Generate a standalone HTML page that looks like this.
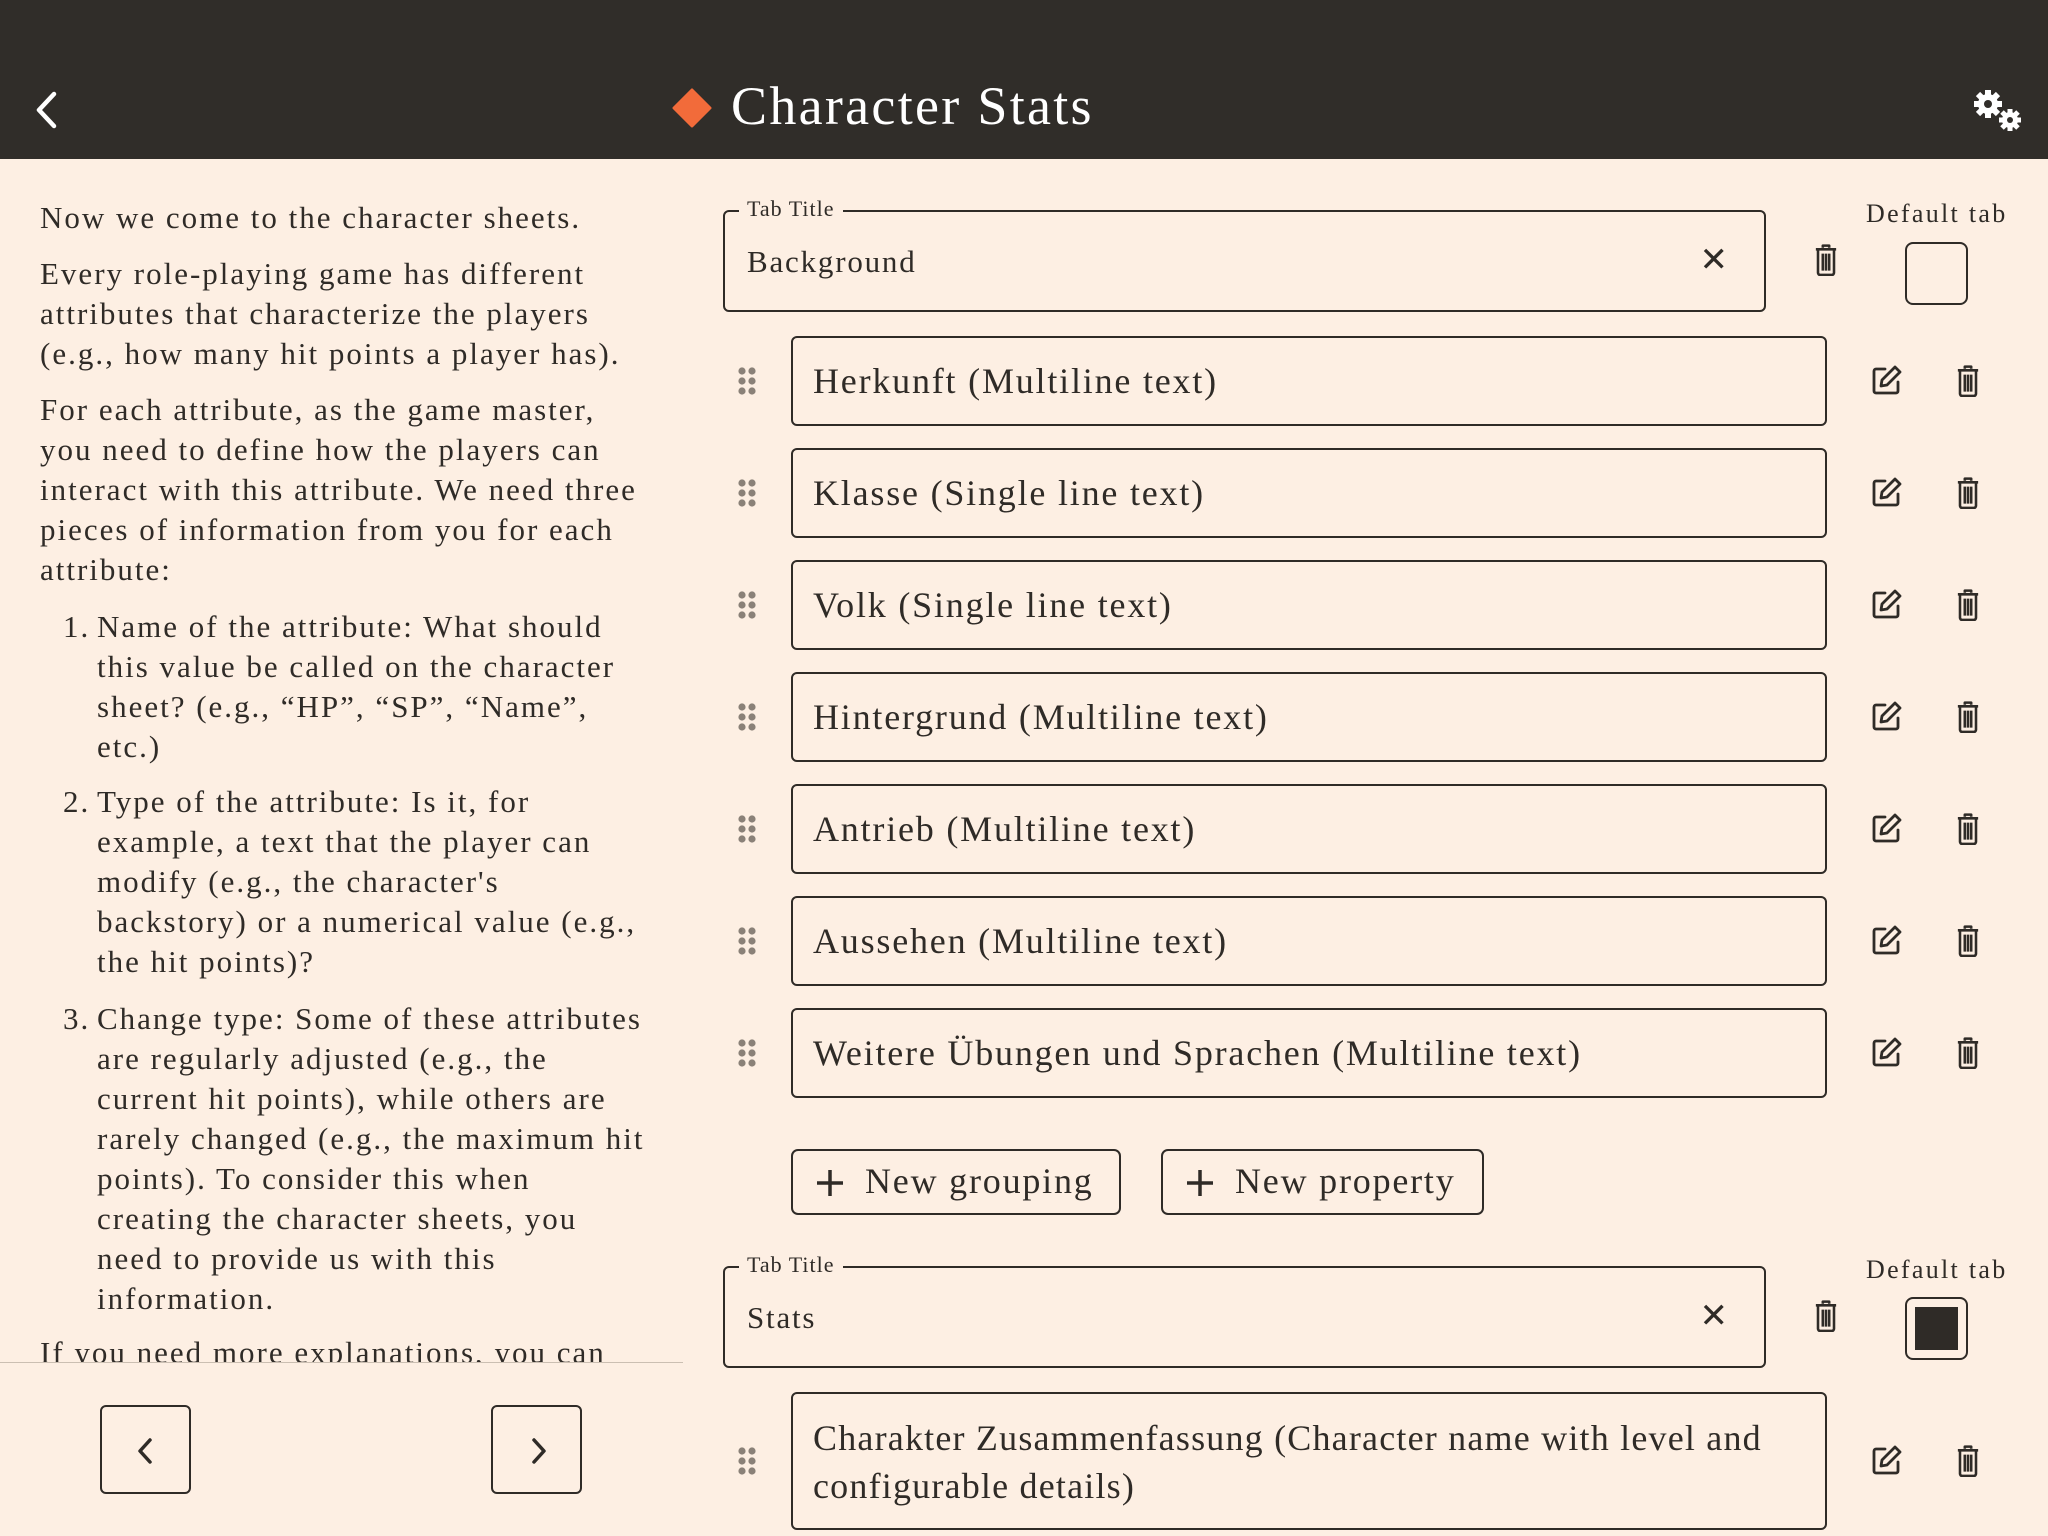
<!DOCTYPE html>
<html><head><meta charset="utf-8">
<style>
*{box-sizing:border-box;margin:0;padding:0}
body{width:2048px;height:1536px;overflow:hidden;background:#fdefe3;font-family:"Liberation Serif",serif;color:#2f2b27;position:relative}
.hdr{position:absolute;left:0;top:0;width:2048px;height:159px;background:#302d29}
.title{position:absolute;left:731px;top:76px;font-size:54px;color:#fff;line-height:60px;white-space:nowrap;letter-spacing:2.3px}
.lt{position:absolute;left:40px;font-size:31px;line-height:40px;white-space:nowrap;letter-spacing:2px}
.num{position:absolute;left:-34px}
.li{position:absolute;left:97px;font-size:31px;line-height:40px;white-space:nowrap;letter-spacing:2px}
.clip{position:absolute;left:0;top:159px;width:683px;height:1203px;overflow:hidden}
.sep{position:absolute;left:0;top:1362px;width:683px;height:1px;background:#cbbfb2}
.nav{position:absolute;top:1405px;width:91px;height:89px;border:2px solid #2f2b27;border-radius:6px}
.fs{position:absolute;left:723px;width:1043px;height:102px;border:2px solid #2f2b27;border-radius:6px}
.lg{position:absolute;left:14px;top:-16px;background:#fdefe3;padding:0 8px;font-size:22px;line-height:26px;letter-spacing:1px}
.fv{position:absolute;left:22px;top:32px;font-size:31px;line-height:36px;letter-spacing:1.8px}
.x{position:absolute;right:36px;top:28px;font-size:34px;font-family:"DejaVu Sans",sans-serif;line-height:40px}
.dl{position:absolute;left:1866px;font-size:26px;line-height:30px;white-space:nowrap;letter-spacing:2.3px}
.cb{position:absolute;left:1905px;width:63px;height:63px;border:2px solid #2f2b27;border-radius:8px}
.row{position:absolute;left:791px;width:1036px;height:90px;border:2px solid #2f2b27;border-radius:6px;font-size:36px;line-height:48px;padding:19px 0 0 20px;white-space:nowrap;letter-spacing:1.8px}
.ic{position:absolute}
.btn{position:absolute;top:1149px;height:66px;border:2px solid #2f2b27;border-radius:7px;font-size:36px;line-height:60px;padding-left:72px;white-space:nowrap;letter-spacing:1.8px}
.btn svg{position:absolute;left:22px;top:17px}
</style></head><body>
<div class="hdr">
<svg style="position:absolute;left:34px;top:90px" width="24" height="40" viewBox="0 0 24 40"><path d="M20 4 L5 20 L20 36" fill="none" stroke="#fff" stroke-width="4.5" stroke-linecap="round" stroke-linejoin="round"/></svg>
<svg style="position:absolute;left:672px;top:88px" width="40" height="40" viewBox="0 0 40 40"><path d="M20 2 L38 20 L20 38 L2 20Z" fill="#f26b3a" stroke="#f26b3a" stroke-width="3" stroke-linejoin="round"/></svg>
<div class="title">Character Stats</div>
<svg style="position:absolute;left:1972px;top:88px" width="54" height="46" viewBox="0 0 54 46">
<g fill="#fff"><circle cx="16" cy="16" r="10"/><g stroke="#fff" stroke-width="6" stroke-linecap="butt"><path d="M16 2V30M2 16H30M6 6L26 26M26 6L6 26"/></g><circle cx="16" cy="16" r="4" fill="#302d29"/>
<circle cx="38" cy="32" r="8"/><g stroke="#fff" stroke-width="5"><path d="M38 21V43M27 32H49M30 24L46 40M46 24L30 40"/></g><circle cx="38" cy="32" r="3" fill="#302d29"/></g></svg>
</div>

<div class="clip">
<div class="lt" style="top:39px">Now we come to the character sheets.</div>
<div class="lt" style="top:95px">Every role-playing game has different<br>attributes that characterize the players<br>(e.g., how many hit points a player has).</div>
<div class="lt" style="top:231px">For each attribute, as the game master,<br>you need to define how the players can<br>interact with this attribute. We need three<br>pieces of information from you for each<br>attribute:</div>
<div class="li" style="top:448px"><span class="num">1.</span>Name of the attribute: What should<br>this value be called on the character<br>sheet? (e.g., “HP”, “SP”, “Name”,<br>etc.)</div>
<div class="li" style="top:623px"><span class="num">2.</span>Type of the attribute: Is it, for<br>example, a text that the player can<br>modify (e.g., the character's<br>backstory) or a numerical value (e.g.,<br>the hit points)?</div>
<div class="li" style="top:840px"><span class="num">3.</span>Change type: Some of these attributes<br>are regularly adjusted (e.g., the<br>current hit points), while others are<br>rarely changed (e.g., the maximum hit<br>points). To consider this when<br>creating the character sheets, you<br>need to provide us with this<br>information.</div>
<div class="lt" style="top:1174px">If you need more explanations, you can</div>
</div>
<div class="sep"></div>
<div class="nav" style="left:100px"><svg style="position:absolute;left:33px;top:30px" width="22" height="28" viewBox="0 0 22 28"><path d="M15 3 L5 14 L15 25" fill="none" stroke="#2f2b27" stroke-width="3.5" stroke-linecap="round" stroke-linejoin="round"/></svg></div>
<div class="nav" style="left:491px"><svg style="position:absolute;left:34px;top:30px" width="22" height="28" viewBox="0 0 22 28"><path d="M7 3 L17 14 L7 25" fill="none" stroke="#2f2b27" stroke-width="3.5" stroke-linecap="round" stroke-linejoin="round"/></svg></div>

<svg width="0" height="0" style="position:absolute"><defs>
<symbol id="tr" viewBox="0 0 24 30"><path d="M9 3.5V1.5H15V3.5M2.5 5H21.5M4.5 5V27a2 2 0 0 0 2 2H17.5a2 2 0 0 0 2-2V5M9 9V25M12 9V25M15 9V25" fill="none" stroke="#2f2b27" stroke-width="2.4" stroke-linejoin="round"/></symbol>
<symbol id="ed" viewBox="0 0 32 32"><path d="M14 5H5a2 2 0 0 0-2 2V27a2 2 0 0 0 2 2H25a2 2 0 0 0 2-2V18" fill="none" stroke="#2f2b27" stroke-width="2.8" stroke-linecap="round"/><path d="M24 3L29 8L16 21L10 22L11 16Z" fill="none" stroke="#2f2b27" stroke-width="2.8" stroke-linejoin="round"/></symbol>
<symbol id="dg" viewBox="0 0 20 30"><g fill="#8a8178"><circle cx="5" cy="5" r="3.6"/><circle cx="15" cy="5" r="3.6"/><circle cx="5" cy="15" r="3.6"/><circle cx="15" cy="15" r="3.6"/><circle cx="5" cy="25" r="3.6"/><circle cx="15" cy="25" r="3.6"/></g></symbol>
</defs></svg>

<div class="fs" style="top:210px"><div class="lg">Tab Title</div><div class="fv">Background</div><div class="x">✕</div></div>
<svg class="ic" style="left:1813px;top:244px" width="26" height="32"><use href="#tr"/></svg>
<div class="dl" style="top:199px">Default tab</div>
<div class="cb" style="top:242px"></div>

<div class="row" style="top:336px">Herkunft (Multiline text)</div>
<div class="row" style="top:448px">Klasse (Single line text)</div>
<div class="row" style="top:560px">Volk (Single line text)</div>
<div class="row" style="top:672px">Hintergrund (Multiline text)</div>
<div class="row" style="top:784px">Antrieb (Multiline text)</div>
<div class="row" style="top:896px">Aussehen (Multiline text)</div>
<div class="row" style="top:1008px">Weitere Übungen und Sprachen (Multiline text)</div>

<svg class="ic" style="left:737px;top:366px" width="20" height="30"><use href="#dg"/></svg>
<svg class="ic" style="left:737px;top:478px" width="20" height="30"><use href="#dg"/></svg>
<svg class="ic" style="left:737px;top:590px" width="20" height="30"><use href="#dg"/></svg>
<svg class="ic" style="left:737px;top:702px" width="20" height="30"><use href="#dg"/></svg>
<svg class="ic" style="left:737px;top:814px" width="20" height="30"><use href="#dg"/></svg>
<svg class="ic" style="left:737px;top:926px" width="20" height="30"><use href="#dg"/></svg>
<svg class="ic" style="left:737px;top:1038px" width="20" height="30"><use href="#dg"/></svg>
<svg class="ic" style="left:737px;top:1446px" width="20" height="30"><use href="#dg"/></svg>

<svg class="ic" style="left:1871px;top:364px" width="32" height="32"><use href="#ed"/></svg>
<svg class="ic" style="left:1871px;top:476px" width="32" height="32"><use href="#ed"/></svg>
<svg class="ic" style="left:1871px;top:588px" width="32" height="32"><use href="#ed"/></svg>
<svg class="ic" style="left:1871px;top:700px" width="32" height="32"><use href="#ed"/></svg>
<svg class="ic" style="left:1871px;top:812px" width="32" height="32"><use href="#ed"/></svg>
<svg class="ic" style="left:1871px;top:924px" width="32" height="32"><use href="#ed"/></svg>
<svg class="ic" style="left:1871px;top:1036px" width="32" height="32"><use href="#ed"/></svg>
<svg class="ic" style="left:1871px;top:1444px" width="32" height="32"><use href="#ed"/></svg>

<svg class="ic" style="left:1955px;top:365px" width="26" height="32"><use href="#tr"/></svg>
<svg class="ic" style="left:1955px;top:477px" width="26" height="32"><use href="#tr"/></svg>
<svg class="ic" style="left:1955px;top:589px" width="26" height="32"><use href="#tr"/></svg>
<svg class="ic" style="left:1955px;top:701px" width="26" height="32"><use href="#tr"/></svg>
<svg class="ic" style="left:1955px;top:813px" width="26" height="32"><use href="#tr"/></svg>
<svg class="ic" style="left:1955px;top:925px" width="26" height="32"><use href="#tr"/></svg>
<svg class="ic" style="left:1955px;top:1037px" width="26" height="32"><use href="#tr"/></svg>
<svg class="ic" style="left:1955px;top:1445px" width="26" height="32"><use href="#tr"/></svg>

<div class="btn" style="left:791px;width:330px"><svg width="30" height="30" viewBox="0 0 30 30"><path d="M15 2V28M2 15H28" stroke="#2f2b27" stroke-width="3.5"/></svg>New grouping</div>
<div class="btn" style="left:1161px;width:323px"><svg width="30" height="30" viewBox="0 0 30 30"><path d="M15 2V28M2 15H28" stroke="#2f2b27" stroke-width="3.5"/></svg>New property</div>

<div class="fs" style="top:1266px"><div class="lg">Tab Title</div><div class="fv">Stats</div><div class="x">✕</div></div>
<svg class="ic" style="left:1813px;top:1300px" width="26" height="32"><use href="#tr"/></svg>
<div class="dl" style="top:1255px">Default tab</div>
<div class="cb" style="top:1297px;padding:8px"><div style="width:43px;height:43px;background:#2f2b27"></div></div>

<div class="row" style="top:1392px;height:138px;white-space:normal;padding-top:20px;letter-spacing:1.2px">Charakter Zusammenfassung (Character name with level and configurable details)</div>
</body></html>
